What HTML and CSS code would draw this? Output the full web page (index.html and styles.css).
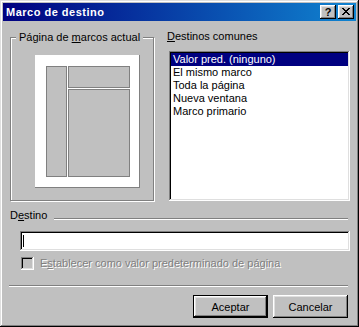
FILE: index.html
```html
<!DOCTYPE html>
<html lang="es">

<head>
    <meta charset="UTF-8">
    <meta name="viewport" content="width=device-width, initial-scale=1.0">
    <title>Marco de destino</title>
    <link rel="stylesheet" href="styles.css">
</head>

<body>
    <div class="window">
        <div class="titlebar">
            <span class="title">Marco de destino</span>
            <div class="title-buttons">
                <button class="tbtn help">?</button>
                <button class="tbtn close">
                    <svg width="8" height="7" viewBox="0 0 8 7">
                        <path d="M0 0h2v1h1v1h2v-1h1v-1h2v1h-1v1h-1v1h-1v1h1v1h1v1h1v1h-2v-1h-1v-1h-2v1h-1v1h-2v-1h1v-1h1v-1h1v-1h-1v-1h-1v-1h-1z" fill="#000"/>
                    </svg>
                </button>
            </div>
        </div>

        <div class="content">
            <div class="top-row">
                <fieldset class="group">
                    <legend>Página de <u>m</u>arcos actual</legend>
                    <div class="preview">
                        <div class="frame frame-left"></div>
                        <div class="frame frame-top"></div>
                        <div class="frame frame-main"></div>
                    </div>
                </fieldset>

                <div class="targets">
                    <div class="label"><u>D</u>estinos comunes</div>
                    <ul class="listbox">
                        <li class="selected">Valor pred. (ninguno)</li>
                        <li>El mismo marco</li>
                        <li>Toda la página</li>
                        <li>Nueva ventana</li>
                        <li>Marco primario</li>
                    </ul>
                </div>
            </div>

            <div class="section-head">
                <span>D<u>e</u>stino</span>
                <div class="etched"></div>
            </div>

            <div class="textfield"><span class="caret"></span></div>

            <div class="check disabled">
                <span class="box"></span>
                <span>E<u>s</u>tablecer como valor predeterminado de página</span>
            </div>

            <div class="separator"></div>

            <div class="actions">
                <button class="btn default">Aceptar</button>
                <button class="btn">Cancelar</button>
            </div>
        </div>
    </div>
</body>

</html>
```

FILE: styles.css
```css
* {
    margin: 0;
    padding: 0;
    box-sizing: border-box;
}

body {
    font-family: "Liberation Sans", Arial, sans-serif;
    font-size: 11px;
    color: #000;
    background: #c0c0c0;
}

.window {
    width: 359px;
    height: 327px;
    padding: 3px;
    background: #c0c0c0;
    box-shadow: inset -1px -1px #000, inset 1px 1px #dfdfdf,
        inset -2px -2px #808080, inset 2px 2px #fff;
}

/* title bar */
.titlebar {
    height: 18px;
    display: flex;
    align-items: center;
    justify-content: space-between;
    padding: 0 2px 0 3px;
    background: linear-gradient(to right, #000080, #1084d0);
}

.title {
    color: #fff;
    font-weight: bold;
    font-size: 11px;
    letter-spacing: 0.5px;
}

.title-buttons {
    display: flex;
    gap: 2px;
}

.tbtn,
.btn {
    background: #c0c0c0;
    border: none;
    font-family: inherit;
    color: #000;
    box-shadow: inset -1px -1px #000, inset 1px 1px #fff,
        inset -2px -2px #808080, inset 2px 2px #dfdfdf;
}

.tbtn {
    width: 16px;
    height: 14px;
    display: flex;
    align-items: center;
    justify-content: center;
    font-size: 11px;
    font-weight: bold;
    line-height: 14px;
    padding-bottom: 1px;
}

.tbtn svg {
    display: block;
}

/* dialog body */
.content {
    padding: 0 6px 0 7px;
}

.top-row {
    margin-top: 9px;
    display: grid;
    grid-template-columns: 144px 1fr;
    column-gap: 13px;
}

.group {
    height: 171px;
    border: 1px solid #808080;
    box-shadow: 1px 1px 0 #fff, inset 1px 1px 0 #fff;
    min-inline-size: 0;
}

.group legend {
    margin-left: 5px;
    padding: 0 3px 0 3px;
    line-height: 14px;
    background: #c0c0c0;
}

.preview {
    width: 105px;
    height: 133px;
    margin: 11px 0 0 24px;
    padding: 11px 9px 10px 11px;
    background: #fff;
    border-right: 1px solid #808080;
    border-bottom: 1px solid #808080;
    display: grid;
    grid-template-columns: 21px 62px;
    grid-template-rows: 22px 88px;
    gap: 1px;
}

.frame {
    background: #c0c0c0;
    border: 1px solid #808080;
}

.frame-left {
    grid-row: 1 / 3;
}

.targets .label {
    line-height: 13px;
}

.listbox {
    list-style: none;
    margin: 8px 0 0 2px;
    height: 150px;
    padding: 2px;
    background: #fff;
    box-shadow: inset -1px -1px #fff, inset 1px 1px #808080,
        inset -2px -2px #dfdfdf, inset 2px 2px #000;
}

.listbox li {
    line-height: 13px;
    padding-left: 2px;
    white-space: nowrap;
}

.listbox li.selected {
    background: #000080;
    color: #fff;
}

/* destino section */
.section-head {
    margin-top: 8px;
    display: flex;
    align-items: flex-start;
    line-height: 13px;
}

.etched {
    flex: 1;
    margin: 9px 2px 0 7px;
    border-top: 1px solid #808080;
    border-bottom: 1px solid #fff;
}

.textfield {
    margin: 9px 0 0 10px;
    height: 20px;
    padding: 4px 0 0 3px;
    background: #fff;
    box-shadow: inset -1px -1px #fff, inset 1px 1px #808080,
        inset -2px -2px #dfdfdf, inset 2px 2px #000;
}

.caret {
    display: block;
    width: 1px;
    height: 12px;
    background: #000;
}

.check {
    margin: 6px 0 0 11px;
    display: flex;
    align-items: center;
    gap: 6px;
    line-height: 13px;
}

.check .box {
    width: 13px;
    height: 13px;
    background: #c0c0c0;
    box-shadow: inset -1px -1px #fff, inset 1px 1px #808080,
        inset -2px -2px #dfdfdf, inset 2px 2px #000;
}

.check.disabled {
    color: #808080;
    text-shadow: 1px 1px 0 #fff;
}

.separator {
    margin: 15px 2px 0 -1px;
    border-top: 1px solid #808080;
    border-bottom: 1px solid #fff;
}

.actions {
    margin: 8px 2px 0 0;
    display: flex;
    justify-content: flex-end;
    gap: 5px;
}

.btn {
    width: 75px;
    height: 23px;
    font-size: 11px;
}

.btn.default {
    box-shadow: inset -1px -1px #000, inset 1px 1px #000,
        inset -2px -2px #000, inset 2px 2px #fff,
        inset -3px -3px #808080, inset 3px 3px #dfdfdf;
}
```
